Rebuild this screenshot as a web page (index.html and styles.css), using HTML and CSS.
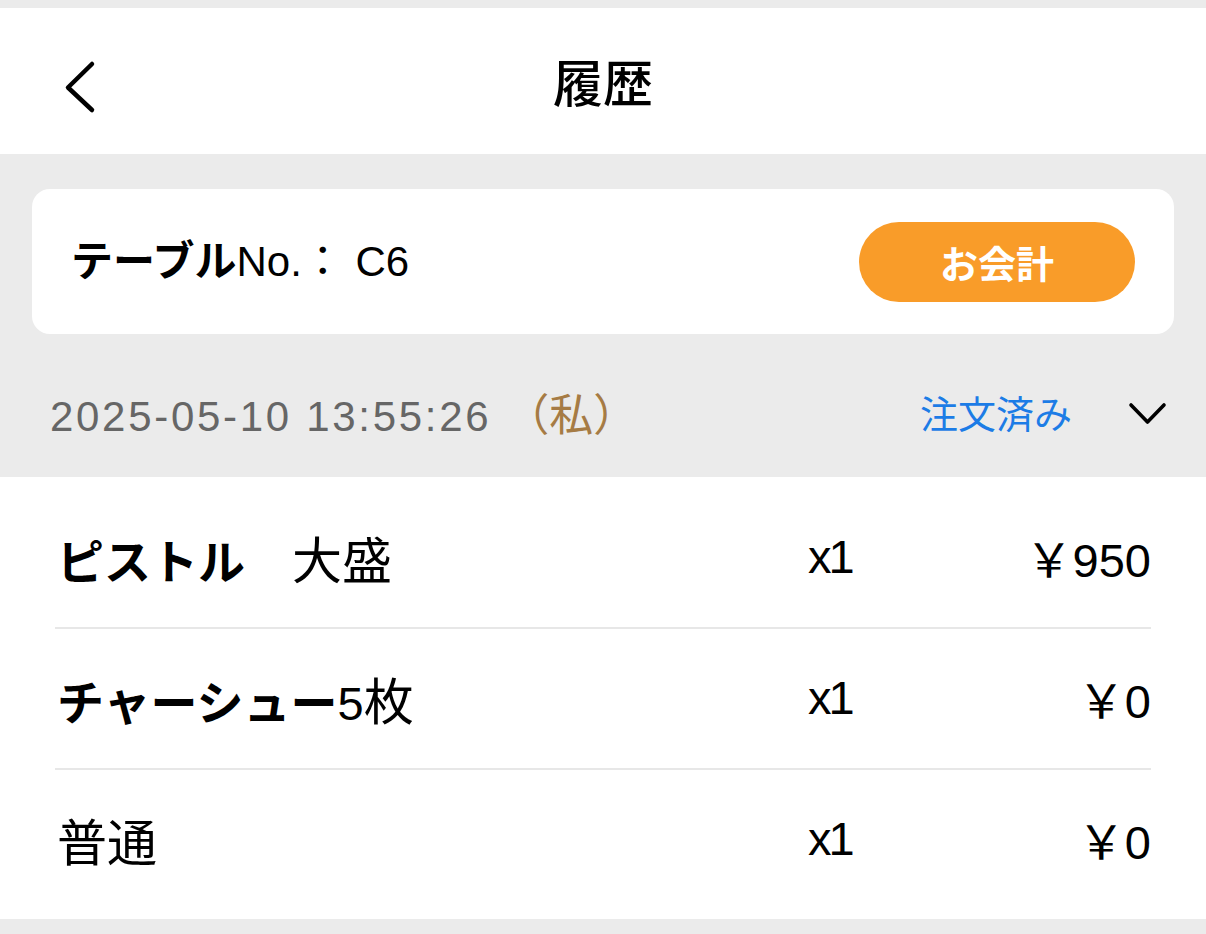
FILE: index.html
```html
<!DOCTYPE html>
<html lang="ja">
<head>
<meta charset="utf-8">
<title>履歴</title>
<link rel="stylesheet" href="styles.css">
</head>
<body>
<div class="page">
  <header class="topbar">
    <button class="back" aria-label="戻る">
      <svg width="40" height="56" viewBox="0 0 40 56"><path d="M31 5 L7 28.5 L31 51" fill="none" stroke="#000" stroke-width="4.5" stroke-linecap="round" stroke-linejoin="round"/></svg>
    </button>
    <h1 class="title">履歴</h1>
  </header>

  <main class="content">
    <section class="table-card">
      <div class="table-label"><span class="kana">テーブル</span>No.： C6</div>
      <button class="pay-btn">お会計</button>
    </section>

    <div class="order-head">
      <div class="order-time">2025-05-10 13:55:26<span class="mine">（私）</span></div>
      <div class="order-status">
        <span class="status">注文済み</span>
        <svg class="chev" width="40" height="24" viewBox="0 0 40 24"><path d="M3 3 L19.5 20 L36 3" fill="none" stroke="#000" stroke-width="3.6" stroke-linecap="round" stroke-linejoin="round"/></svg>
      </div>
    </div>

    <section class="items">
      <div class="item">
        <div class="name"><span class="kana">ピストル</span>　<span class="kanji">大盛</span></div>
        <div class="qty">x1</div>
        <div class="price">￥950</div>
      </div>
      <div class="item">
        <div class="name"><span class="kana">チャーシュー</span>5<span class="kanji">枚</span></div>
        <div class="qty">x1</div>
        <div class="price">￥0</div>
      </div>
      <div class="item">
        <div class="name"><span class="kanji">普通</span></div>
        <div class="qty">x1</div>
        <div class="price">￥0</div>
      </div>
    </section>
  </main>
</div>
</body>
</html>
```

FILE: styles.css
```css
* { box-sizing: border-box; }
html, body {
  margin: 0;
  padding: 0;
  background: #ebebeb;
  font-family: "Liberation Sans", "Noto Sans CJK JP", sans-serif;
  color: #000;
}
.page {
  padding-top: 8px;
  min-height: 934px;
}
.topbar {
  position: relative;
  height: 146px;
  background: #fff;
  display: flex;
  align-items: center;
  justify-content: center;
}
.back {
  position: absolute;
  left: 61px;
  top: 51px;
  padding: 0;
  border: 0;
  background: none;
  display: flex;
}
.title {
  margin: 0 0 2px;
  font-family: "Noto Sans CJK JP", sans-serif;
  font-size: 50px;
  font-weight: 500;
  line-height: 1;
}
.content {
  display: flex;
  flex-direction: column;
}
.table-card {
  margin: 35px 32px 0;
  height: 145px;
  background: #fff;
  border-radius: 18px;
  display: flex;
  align-items: center;
  justify-content: space-between;
  padding: 0 39px 0 39px;
}
.table-label {
  font-size: 42px;
  line-height: 1;
}
.kana {
  font-weight: 700;
}
.pay-btn {
  width: 276px;
  height: 80px;
  border: 0;
  border-radius: 40px;
  background: #f99c29;
  color: #fff;
  font-family: "Noto Sans CJK JP", sans-serif;
  font-size: 38px;
  font-weight: 700;
  padding: 0;
}
.order-head {
  height: 143px;
  padding: 12px 38px 0 50px;
  display: flex;
  align-items: center;
  justify-content: space-between;
}
.order-time {
  font-size: 42px;
  color: #666;
  letter-spacing: 2.7px;
}
.mine {
  color: #a67b44;
  margin-left: 14px;
  font-family: "Noto Sans CJK JP", sans-serif;
  font-size: 44px;
  letter-spacing: 0;
}
.order-status {
  display: flex;
  align-items: center;
  gap: 56px;
}
.status {
  color: #1c7ce6;
  font-family: "Noto Sans CJK JP", sans-serif;
  font-size: 38px;
}
.chev {
  margin-top: 4px;
}
.items {
  background: #fff;
  padding: 11px 55px 10px;
}
.item {
  height: 141px;
  display: grid;
  grid-template-columns: 1fr 150px 193px;
  align-items: center;
  font-size: 47px;
  padding-bottom: 2px;
  border-bottom: 2px solid #e7e7e7;
}
.item:last-child {
  height: 139px;
  border-bottom: 0;
}
.name {
  padding-left: 2px;
}
.kanji {
  font-size: 50px;
}
.qty {
  letter-spacing: -3px;
}
.price {
  text-align: right;
}
```
